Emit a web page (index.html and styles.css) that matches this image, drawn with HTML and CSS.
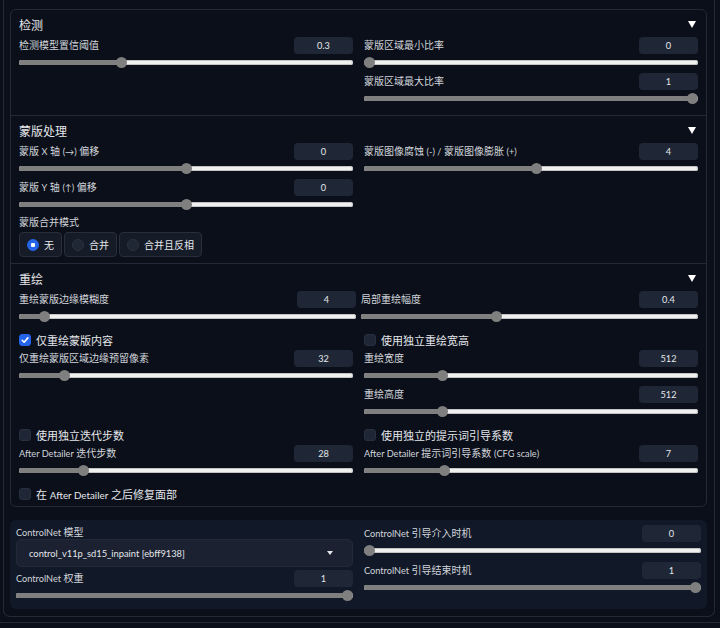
FILE: index.html
```html
<!DOCTYPE html>
<html lang="zh">
<head>
    <meta charset="UTF-8">
    <meta name="viewport" content="width=device-width, initial-scale=1.0">
    <title>ADetailer</title>
    <link rel="stylesheet" href="styles.css">
</head>
<body>

    <div class="panel">

        <div class="group">

            <!-- 检测 -->
            <div class="section sec-detect">
                <div class="sec-head">
                    <span>检测</span>
                    <svg class="tri" width="8" height="7" viewBox="0 0 8 7"><path d="M0 0H8L4 7Z" fill="#fff"/></svg>
                </div>
                <div class="cols">
                    <div class="col">
                        <div class="field">
                            <div class="field-top"><span class="lbl">检测模型置信阈值</span><span class="num">0.3</span></div>
                            <div class="slider" style="--v:0.3"><div class="fill"></div><div class="knob"></div></div>
                        </div>
                    </div>
                    <div class="col">
                        <div class="field">
                            <div class="field-top"><span class="lbl">蒙版区域最小比率</span><span class="num">0</span></div>
                            <div class="slider" style="--v:0"><div class="fill"></div><div class="knob"></div></div>
                        </div>
                        <div class="field">
                            <div class="field-top"><span class="lbl">蒙版区域最大比率</span><span class="num">1</span></div>
                            <div class="slider" style="--v:1"><div class="fill"></div><div class="knob"></div></div>
                        </div>
                    </div>
                </div>
            </div>

            <!-- 蒙版处理 -->
            <div class="section sec-mask">
                <div class="sec-head">
                    <span>蒙版处理</span>
                    <svg class="tri" width="8" height="7" viewBox="0 0 8 7"><path d="M0 0H8L4 7Z" fill="#fff"/></svg>
                </div>
                <div class="cols">
                    <div class="col">
                        <div class="field">
                            <div class="field-top"><span class="lbl">蒙版 <span class="en">X</span> 轴 <span class="en">(→)</span> 偏移</span><span class="num">0</span></div>
                            <div class="slider" style="--v:0.5"><div class="fill"></div><div class="knob"></div></div>
                        </div>
                        <div class="field">
                            <div class="field-top"><span class="lbl">蒙版 <span class="en">Y</span> 轴 <span class="en">(↑)</span> 偏移</span><span class="num">0</span></div>
                            <div class="slider" style="--v:0.5"><div class="fill"></div><div class="knob"></div></div>
                        </div>
                        <div class="lbl lbl-block">蒙版合并模式</div>
                        <div class="radios">
                            <div class="radio on"><span class="dot"></span>无</div>
                            <div class="radio"><span class="dot"></span>合并</div>
                            <div class="radio"><span class="dot"></span>合并且反相</div>
                        </div>
                    </div>
                    <div class="col">
                        <div class="field">
                            <div class="field-top"><span class="lbl">蒙版图像腐蚀 <span class="en">(-) /</span> 蒙版图像膨胀 <span class="en">(+)</span></span><span class="num">4</span></div>
                            <div class="slider" style="--v:0.5156"><div class="fill"></div><div class="knob"></div></div>
                        </div>
                    </div>
                </div>
            </div>

            <!-- 重绘 -->
            <div class="section sec-paint">
                <div class="sec-head">
                    <span>重绘</span>
                    <svg class="tri" width="8" height="7" viewBox="0 0 8 7"><path d="M0 0H8L4 7Z" fill="#fff"/></svg>
                </div>
                <div class="stack">
                    <div class="cols cols-tight">
                        <div class="field">
                            <div class="field-top"><span class="lbl">重绘蒙版边缘模糊度</span><span class="num">4</span></div>
                            <div class="slider" style="--v:0.0625"><div class="fill"></div><div class="knob"></div></div>
                        </div>
                        <div class="field">
                            <div class="field-top"><span class="lbl">局部重绘幅度</span><span class="num">0.4</span></div>
                            <div class="slider" style="--v:0.4"><div class="fill"></div><div class="knob"></div></div>
                        </div>
                    </div>

                    <div class="cols">
                        <div class="col">
                            <label class="check"><span class="box on"><svg width="12" height="12" viewBox="0 0 12 12"><path d="M3.2 6.3l1.9 1.9 3.8-4.3" stroke="#fff" stroke-width="1.6" fill="none" stroke-linecap="round" stroke-linejoin="round"/></svg></span>仅重绘蒙版内容</label>
                            <div class="field">
                                <div class="field-top"><span class="lbl">仅重绘蒙版区域边缘预留像素</span><span class="num">32</span></div>
                                <div class="slider" style="--v:0.125"><div class="fill"></div><div class="knob"></div></div>
                            </div>
                        </div>
                        <div class="col">
                            <label class="check"><span class="box"></span>使用独立重绘宽高</label>
                            <div class="field">
                                <div class="field-top"><span class="lbl">重绘宽度</span><span class="num">512</span></div>
                                <div class="slider" style="--v:0.2258"><div class="fill"></div><div class="knob"></div></div>
                            </div>
                            <div class="field">
                                <div class="field-top"><span class="lbl">重绘高度</span><span class="num">512</span></div>
                                <div class="slider" style="--v:0.2258"><div class="fill"></div><div class="knob"></div></div>
                            </div>
                        </div>
                    </div>

                    <div class="cols">
                        <div class="col">
                            <label class="check"><span class="box"></span>使用独立迭代步数</label>
                            <div class="field">
                                <div class="field-top"><span class="lbl"><span class="en">After Detailer</span> 迭代步数</span><span class="num">28</span></div>
                                <div class="slider" style="--v:0.1812"><div class="fill"></div><div class="knob"></div></div>
                            </div>
                        </div>
                        <div class="col">
                            <label class="check"><span class="box"></span>使用独立的提示词引导系数</label>
                            <div class="field">
                                <div class="field-top"><span class="lbl"><span class="en">After Detailer</span> 提示词引导系数 <span class="en">(CFG scale)</span></span><span class="num">7</span></div>
                                <div class="slider" style="--v:0.2333"><div class="fill"></div><div class="knob"></div></div>
                            </div>
                        </div>
                    </div>

                    <label class="check"><span class="box"></span><span>在 <span class="en">After Detailer</span> 之后修复面部</span></label>
                </div>
            </div>

        </div>

        <!-- ControlNet -->
        <div class="cnet">
            <div class="cols cols-cnet">
                <div class="col col-cnet">
                    <div class="lbl lbl-block"><span class="en">ControlNet</span> 模型</div>
                    <div class="dropdown">
                        <span class="en">control_v11p_sd15_inpaint [ebff9138]</span>
                        <svg width="6" height="4" viewBox="0 0 6 4"><path d="M0 0H6L3 4Z" fill="#e5e7eb"/></svg>
                    </div>
                    <div class="field">
                        <div class="field-top"><span class="lbl"><span class="en">ControlNet</span> 权重</span><span class="num">1</span></div>
                        <div class="slider" style="--v:1"><div class="fill"></div><div class="knob"></div></div>
                    </div>
                </div>
                <div class="col col-cnet-r">
                    <div class="field">
                        <div class="field-top"><span class="lbl"><span class="en">ControlNet</span> 引导介入时机</span><span class="num">0</span></div>
                        <div class="slider" style="--v:0"><div class="fill"></div><div class="knob"></div></div>
                    </div>
                    <div class="field">
                        <div class="field-top"><span class="lbl"><span class="en">ControlNet</span> 引导结束时机</span><span class="num">1</span></div>
                        <div class="slider" style="--v:1"><div class="fill"></div><div class="knob"></div></div>
                    </div>
                </div>
            </div>
        </div>

    </div>

    <div class="next"></div>

</body>
</html>
```

FILE: styles.css
```css
*{
    box-sizing: border-box;
}

body{
    margin: 0;
    background-color: #0b0f19;
    color: #d1d5db;
    font-family: Lato, "Noto Sans CJK SC", sans-serif;
    font-size: 10px;
}

.en{
    font-family: Lato, sans-serif;
    font-size: 9.2px;
}

.panel{
    width: 712px;
    margin-left: 3px;
    padding: 9px 7px 7px 6px;
    border: 1px solid #232936;
    border-top: none;
    border-radius: 0 0 7px 7px;
}

.group{
    border: 1px solid #232936;
    border-radius: 6px;
}

.section{
    padding: 6px 8px 10px 8px;
}

.section + .section{
    border-top: 1px solid #232936;
}

.sec-mask{
    padding-bottom: 6px;
}

.sec-paint{
    padding-bottom: 6px;
}

.sec-head{
    height: 16px;
    margin-bottom: 5px;
    display: flex;
    align-items: center;
    justify-content: space-between;
    font-size: 12px;
    color: #e5e7eb;
}

.sec-head .tri{
    margin-right: 2px;
}

.cols{
    display: flex;
    gap: 11px;
    align-items: flex-start;
}

.cols > .col,
.cols > .field{
    flex: 1;
    min-width: 0;
}

.cols-tight{
    gap: 5px;
}

.col{
    display: flex;
    flex-direction: column;
    gap: 4px;
}

.stack{
    display: flex;
    flex-direction: column;
    gap: 9px;
}

/* label + number + slider */

.field-top{
    height: 18px;
    display: flex;
    justify-content: space-between;
    align-items: flex-start;
}

.lbl{
    line-height: 16px;
    color: #d1d5db;
    white-space: nowrap;
}

.lbl-block{
    height: 14px;
    line-height: 14px;
}

.num{
    width: 59px;
    height: 17px;
    line-height: 17px;
    text-align: center;
    background-color: #1f2736;
    border-radius: 4px;
    color: #e5e7eb;
    font-size: 9.2px;
}

.slider{
    height: 14px;
    position: relative;
    display: flex;
    align-items: center;
}

.slider::before{
    content: "";
    width: 100%;
    height: 5px;
    border-radius: 3px;
    background-color: #f0f0f0;
    box-shadow: inset 0 0 0 1px #c4c4c4;
}

.slider .fill{
    position: absolute;
    left: 0;
    top: 4.5px;
    height: 5px;
    border-radius: 3px;
    background-color: #7f7f7f;
    width: calc(var(--v) * (100% - 11px) + 5.5px);
}

.slider .knob{
    position: absolute;
    top: 1.5px;
    width: 11px;
    height: 11px;
    border-radius: 50%;
    background-color: #7f7f7f;
    left: calc(var(--v) * (100% - 11px));
}

/* radios */

.radios{
    display: flex;
    gap: 2px;
    margin-top: -1px;
}

.radio{
    height: 25px;
    display: flex;
    align-items: center;
    gap: 5px;
    padding: 0 7px;
    background-color: #151b27;
    border: 1px solid #272e3c;
    border-radius: 4px;
    color: #e5e7eb;
    font-size: 10px;
}

.radio .dot{
    width: 12px;
    height: 12px;
    border-radius: 50%;
    background-color: #1f2735;
    border: 1px solid #2b3342;
}

.radio.on .dot{
    border-color: #2563eb;
    background-image: radial-gradient(circle, #fff 0 2px, #2563eb 2.5px);
}

/* checkboxes */

.check{
    height: 16px;
    margin-bottom: -2px;
    display: flex;
    align-items: center;
    gap: 5px;
    font-size: 11px;
    color: #e5e7eb;
}

.check .en{
    font-size: 9.8px;
}

.check .box{
    width: 12px;
    height: 12px;
    border-radius: 3px;
    background-color: #1f2736;
    border: 1px solid #283040;
    display: flex;
}

.check .box.on{
    background-color: #2563eb;
    border-color: #2563eb;
}

.check .box svg{
    margin: -1px;
}

/* controlnet */

.cnet{
    margin-top: 13px;
    padding: 5px 6px 7px 6px;
    background-color: #111827;
    border-radius: 6px;
}

.col-cnet{
    gap: 0;
}

.col-cnet .dropdown{
    margin-bottom: 3px;
}

.col-cnet-r{
    gap: 5px;
}

.dropdown{
    height: 28px;
    display: flex;
    align-items: center;
    justify-content: space-between;
    padding: 0 19px 0 12px;
    background-color: #1b2130;
    border: 1px solid #222937;
    border-radius: 5px;
    color: #e5e7eb;
}

.dropdown .en{
    font-size: 9.3px;
}

.next{
    margin-top: 5px;
    height: 12px;
    border-top: 1px solid #232936;
}
```
